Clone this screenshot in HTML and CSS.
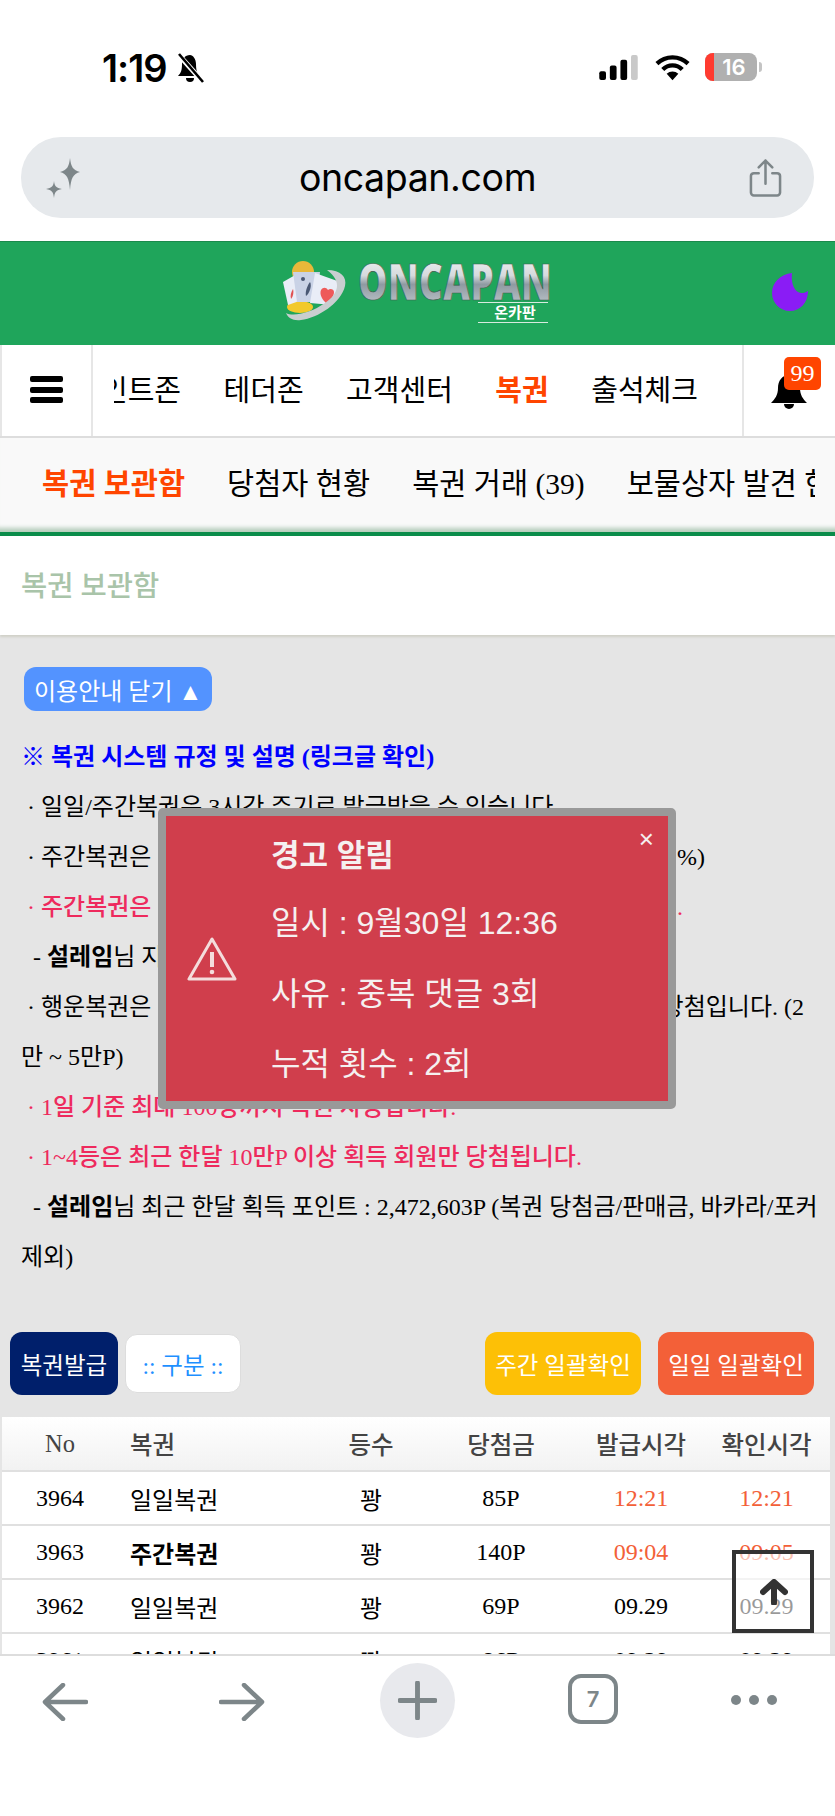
FILE: index.html
```html
<!DOCTYPE html>
<html lang="ko">
<head>
<meta charset="utf-8">
<title>oncapan.com</title>
<link rel="stylesheet" href="styles.css">
</head>
<body>
<div class="phone">
	<div class="status">
		<div class="status-left">
			<span class="clock">1:19</span>
			<svg class="mute" viewBox="0 0 30 30"><path d="M15 2c-5 0-8 4-8 9 0 6-1 9-4 12h22c-3-3-4-6-4-12 0-5-3-9-6-9z" fill="#000"/><path d="M11 25a4 4 0 0 0 8 0z" fill="#000"/><path d="M3 1l25 28" stroke="#fff" stroke-width="5"/><path d="M4 1l24 28" stroke="#000" stroke-width="2.6"/></svg>
		</div>
		<div class="status-right">
			<svg class="signal" viewBox="0 0 40 26"><rect x="0" y="17" width="7" height="9" rx="2" fill="#000"/><rect x="11" y="11" width="7" height="15" rx="2" fill="#000"/><rect x="22" y="5" width="7" height="21" rx="2" fill="#000"/><rect x="33" y="0" width="7" height="26" rx="2" fill="#c9c9c9"/></svg>
			<svg class="wifi" viewBox="0 0 36 26"><path d="M2 9a23 23 0 0 1 32 0" fill="none" stroke="#000" stroke-width="4.4"/><path d="M8 15a14 14 0 0 1 20 0" fill="none" stroke="#000" stroke-width="4.4"/><path d="M12 19.500a9 9 0 0 1 12 0L18 26z" fill="#000"/></svg>
			<div class="battery"><span class="battery-low"></span><span class="battery-num">16</span></div>
			<span class="battery-cap"></span>
		</div>
	</div>

	<div class="urlbar">
		<svg class="spark" viewBox="0 0 40 40"><path d="M24 0c1 9 3 12 10 14-7 2-9 6-10 18-1-12-3-16-10-18 7-2 9-5 10-14z" fill="#7d8689"/><path d="M8 23c.6 5 2 7 8 8-6 1-7.400 3-8 9-.6-6-2-8-8-9 6-1 7.400-3 8-8z" fill="#7d8689"/></svg>
		<span class="url">oncapan.com</span>
		<svg class="share" viewBox="0 0 34 40"><path d="M10 15H5a3 3 0 0 0-3 3v17a3 3 0 0 0 3 3h24a3 3 0 0 0 3-3V18a3 3 0 0 0-3-3h-5" fill="none" stroke="#7d8689" stroke-width="2.6" stroke-linecap="round"/><path d="M17 26V2M10 9l7-7 7 7" fill="none" stroke="#7d8689" stroke-width="2.600" stroke-linecap="round" stroke-linejoin="round"/></svg>
	</div>

	<div class="content">
		<header class="site-head">
			<svg class="logo" viewBox="0 0 270 72">
				<defs>
					<linearGradient id="metal" x1="0" y1="0" x2="0" y2="1">
						<stop offset="0" stop-color="#fbfcfc"/>
						<stop offset=".42" stop-color="#d5dadd"/>
						<stop offset=".55" stop-color="#8f9aa2"/>
						<stop offset=".8" stop-color="#b4bcc2"/>
						<stop offset="1" stop-color="#f2f4f5"/>
					</linearGradient>
				</defs>
				<circle cx="20" cy="14" r="11" fill="#e8b83a"/>
				<ellipse cx="17" cy="49" rx="13" ry="6" fill="#f2c92c"/>
				<path d="M0 24l14-8 5 26-14 5z" fill="#e9edf7"/>
				<path d="M10 14h27l-3 30H14z" fill="#c9d2e6"/>
				<path d="M32 15l28 10-11 22-22-2z" fill="#e9edf7"/>
				<path d="M38 32c2-3 5-3 7 0 2-2 6-1 6 2 0 5-4 9-8 11-3-3-7-8-5-13z" fill="#ee5a5a"/>
				<path d="M27 24c2 3 0 11-4 14-1-4 1-10 4-14z" fill="#4a5874"/>
				<circle cx="20" cy="21" r="2" fill="#4a5874"/>
				<path d="M10 31c1 3 0 8-2 10-1-3 0-7 2-10z" fill="#e05252"/>
				<path d="M44 12c14 0 20 7 18 16-4 17-27 32-44 34-8 1-13-2-15-7 7 4 25 0 39-10 13-9 18-21 2-33z" fill="#c9ced0"/>
				<text class="logo-word" x="75" y="42" textLength="194" lengthAdjust="spacingAndGlyphs" fill="url(#metal)">ONCAPAN</text>
				<rect x="195" y="44" width="70" height="1" fill="#d7eadf"/>
				<text class="logo-sub" x="232" y="60" text-anchor="middle">온카판</text>
				<rect x="195" y="64" width="70" height="1" fill="#d7eadf"/>
			</svg>
			<svg class="moon" viewBox="0 0 36 38"><path d="M20 0C8 1 0 10 0 20c0 10 8 18 18 18 10 0 18-8 18-20-3 2-7 3-10 1-5-3-7-11-6-19z" fill="#8a1cf5"/></svg>
		</header>

		<nav class="main-nav">
			<div class="burger"><i></i><i></i><i></i></div>
			<div class="menu-wrap">
				<div class="menu">
					<a>인트존</a>
					<a>테더존</a>
					<a>고객센터</a>
					<a class="on">복권</a>
					<a>출석체크</a>
				</div>
			</div>
			<div class="alarm">
				<svg class="bell" viewBox="0 0 36 34"><path d="M18 0c-7 0-11 6-11 13 0 7-3 11-7 15h36c-4-4-7-8-7-15 0-7-4-13-11-13z" fill="#000"/><path d="M13 29a5 5 0 0 0 10 0z" fill="#000"/></svg>
				<span class="badge">99</span>
			</div>
		</nav>

		<div class="sub-nav">
			<div class="sub-track">
				<a class="on">복권 보관함</a>
				<a>당첨자 현황</a>
				<a>복권 거래 (39)</a>
				<a>보물상자 발견 현황</a>
			</div>
		</div>

		<div class="page-title">복권 보관함</div>

		<section class="guide">
			<button class="guide-btn">이용안내 닫기 ▲</button>
			<p class="rule head">※ 복권 시스템 규정 및 설명 (링크글 확인)</p>
			<p class="rule">&nbsp;· 일일/주간복권은 3시간 주기로 발급받을 수 있습니다.</p>
			<p class="rule cut">&nbsp;· 주간복권은<span class="tail t-pct">%)</span></p>
			<p class="rule cut pink">&nbsp;· 주간복권은<span class="tail t-dot">.</span></p>
			<p class="rule">&nbsp; - <b>설레임</b>님 지</p>
			<p class="rule cut">&nbsp;· 행운복권은<span class="tail t-win">당첨입니다. (2</span></p>
			<p class="rule">만 ~ 5만P)</p>
			<p class="rule pink">&nbsp;· 1일 기준 최대 100장까지 복권 사용합니다.</p>
			<p class="rule pink">&nbsp;· 1~4등은 최근 한달 10만P 이상 획득 회원만 당첨됩니다.</p>
			<p class="rule">&nbsp; - <b>설레임</b>님 최근 한달 획득 포인트 : 2,472,603P (복권 당첨금/판매금, 바카라/포커<br>제외)</p>
		</section>

		<div class="actions">
			<button class="act navy">복권발급</button>
			<button class="act plain">:: 구분 ::</button>
			<button class="act amber push">주간 일괄확인</button>
			<button class="act coral">일일 일괄확인</button>
		</div>

		<table class="tickets">
			<thead>
				<tr><th class="c-no">No</th><th class="c-name">복권</th><th class="c-rank">등수</th><th class="c-prize">당첨금</th><th class="c-time">발급시각</th><th class="c-last">확인시각</th></tr>
			</thead>
			<tbody>
				<tr><td>3964</td><td class="c-name">일일복권</td><td>꽝</td><td>85P</td><td class="red">12:21</td><td class="red">12:21</td></tr>
				<tr><td>3963</td><td class="c-name"><b>주간복권</b></td><td>꽝</td><td>140P</td><td class="red">09:04</td><td class="red">09:05</td></tr>
				<tr><td>3962</td><td class="c-name">일일복권</td><td>꽝</td><td>69P</td><td>09.29</td><td>09.29</td></tr>
				<tr><td>3961</td><td class="c-name">일일복권</td><td>꽝</td><td>86P</td><td>09.29</td><td>09.29</td></tr>
			</tbody>
		</table>
	</div>

	<div class="toolbar">
		<svg class="tool-ic" viewBox="0 0 46 38"><path d="M21 2L3 19l18 17M3 19h41" fill="none" stroke="#7d8689" stroke-width="4.500" stroke-linecap="round" stroke-linejoin="round"/></svg>
		<svg class="tool-ic fwd" viewBox="0 0 46 38"><path d="M25 2l18 17-18 17M43 19H2" fill="none" stroke="#7d8689" stroke-width="4.500" stroke-linecap="round" stroke-linejoin="round"/></svg>
		<div class="plus-btn"><svg viewBox="0 0 40 40"><path d="M20 2v36M2 20h36" stroke="#7d8689" stroke-width="5" stroke-linecap="round"/></svg></div>
		<div class="tabs-btn">7</div>
		<div class="dots"><i></i><i></i><i></i></div>
	</div>

	<div class="warn-box">
		<span class="warn-x">×</span>
		<svg class="warn-ic" viewBox="0 0 50 46"><path d="M25 3L2 43h46z" fill="none" stroke="#f4dcdc" stroke-width="3" stroke-linejoin="round"/><path d="M25 16v15" stroke="#f4dcdc" stroke-width="4"/><circle cx="25" cy="36" r="2.300" fill="#f4dcdc"/></svg>
		<div class="warn-text">
			<strong>경고 알림</strong>
			<span>일시 : 9월30일 12:36</span>
			<span>사유 : 중복 댓글 3회</span>
			<span>누적 횟수 : 2회</span>
		</div>
	</div>

	<div class="to-top">
		<svg viewBox="0 0 28 26"><path d="M14 24V4M3 13L14 3l11 10" fill="none" stroke="#333" stroke-width="6" stroke-linecap="round" stroke-linejoin="round"/></svg>
	</div>
</div>
</body>
</html>
```

FILE: styles.css
```css
*{
	box-sizing:border-box;
}
html,body{
	margin:0;
	padding:0;
	background:#fff;
}
body{
	font-family:"Liberation Serif","Noto Sans CJK KR",serif;
	color:#000;
}
a{
	color:inherit;
	text-decoration:none;
}
.phone{
	position:relative;
	width:835px;
	height:1816px;
	overflow:hidden;
	display:flex;
	flex-direction:column;
}

/* status bar */
.status{
	height:137px;
	flex:none;
	padding:52px 73px 0 102px;
	display:flex;
	justify-content:space-between;
	align-items:flex-start;
}
.status-left{
	display:flex;
	align-items:center;
	gap:8px;
}
.clock{
	font-family:"Inter","Liberation Sans",sans-serif;
	font-size:38px;
	font-weight:600;
	line-height:32px;
	letter-spacing:-1px;
}
.mute{
	width:30px;
	height:30px;
}
.status-right{
	display:flex;
	align-items:center;
	height:30px;
}
.signal{
	width:39px;
	height:25px;
	margin-right:17px;
}
.wifi{
	width:35px;
	height:27px;
	margin-right:15px;
}
.battery{
	position:relative;
	width:52px;
	height:28px;
	border-radius:8px;
	background:#b0b0b0;
	overflow:hidden;
	text-align:center;
}
.battery-low{
	position:absolute;
	left:0;
	top:0;
	bottom:0;
	width:9px;
	background:#ff3b30;
}
.battery-num{
	position:relative;
	left:3px;
	font-family:"Inter","Liberation Sans",sans-serif;
	font-size:22px;
	font-weight:600;
	line-height:28px;
	color:#fff;
}
.battery-cap{
	width:3px;
	height:10px;
	margin-left:2px;
	border-radius:0 3px 3px 0;
	background:#c4c4c4;
}

/* address bar */
.urlbar{
	flex:none;
	height:81px;
	margin:0 21px 23px;
	padding:0 25px;
	border-radius:40px;
	background:#e6e9ec;
	display:flex;
	align-items:center;
	justify-content:space-between;
}
.spark{
	width:40px;
	height:40px;
}
.url{
	font-family:"Inter","Liberation Sans",sans-serif;
	font-size:37.500px;
	letter-spacing:-.4px;
}
.share{
	width:33px;
	height:40px;
	margin-right:7px;
}

.content{
	flex:1;
	min-height:0;
	overflow:hidden;
	background:#e5e5e5;
}

/* green header */
.site-head{
	position:relative;
	height:104px;
	background:#1fa55b;
	border-top:1px solid #1a8a4c;
	display:flex;
	justify-content:center;
	align-items:center;
}
.logo{
	width:270px;
	height:72px;
}
.logo-word{
	font-family:"Open Sans","Liberation Sans",sans-serif;
	font-size:50px;
	font-weight:800;
	stroke:#3d5a4c;
	stroke-width:.7px;
}
.logo-sub{
	font-family:"Noto Sans CJK KR",sans-serif;
	font-size:15px;
	font-weight:700;
	fill:#fff;
}
.moon{
	position:absolute;
	right:27px;
	top:31px;
	width:36px;
	height:38px;
}

/* main menu */
.main-nav{
	height:93px;
	background:#fff;
	border-bottom:2px solid #ddd;
	display:flex;
}
.burger{
	flex:none;
	width:93px;
	padding-top:31px;
	border-right:2px solid #e6e6e6;
	border-left:2px solid #e6e6e6;
}
.burger i{
	display:block;
	width:33px;
	height:6px;
	margin:0 auto 4.500px;
	border-radius:2px;
	background:#000;
}
.menu-wrap{
	flex:1;
	margin-left:21px;
	overflow:hidden;
}
.menu{
	display:flex;
	gap:42.500px;
	margin-left:-13px;
	font-size:29px;
	line-height:92px;
	white-space:nowrap;
}
.menu .on{
	color:#ff4500;
	font-weight:700;
}
.alarm{
	position:relative;
	flex:none;
	width:93px;
	border-left:2px solid #e6e6e6;
}
.bell{
	position:absolute;
	left:27px;
	top:30px;
	width:36px;
	height:34px;
}
.badge{
	position:absolute;
	left:40px;
	top:12px;
	width:37px;
	height:33px;
	border-radius:5px;
	background:#ff4500;
	color:#fff;
	font-size:24px;
	line-height:32px;
	text-align:center;
}

/* sub menu */
.sub-nav{
	height:98px;
	padding:0 20px 0 42px;
	background:#f9f9f9;
	border-bottom:4px solid #0a8c4a;
	box-shadow:inset 0 -8px 4px -4px #b5cdbb;
}
.sub-track{
	display:flex;
	gap:42px;
	overflow:hidden;
	font-size:29.500px;
	line-height:92px;
	white-space:nowrap;
}
.sub-track .on{
	color:#ff4500;
	font-weight:700;
}

.page-title{
	height:99px;
	padding-left:21px;
	background:#fff;
	box-shadow:0 2px 2px #d0d0c8;
	color:#a9c4a9;
	font-size:28.500px;
	font-weight:500;
	line-height:102px;
}

/* guide text */
.guide{
	padding:32px 21px 0;
}
.guide-btn{
	display:block;
	height:44px;
	margin:0 0 21px 3px;
	padding:0 10px;
	border:0;
	border-radius:12px;
	background:#5393ff;
	color:#fff;
	font-family:inherit;
	font-size:24px;
}
.rule{
	margin:0;
	font-size:24px;
	line-height:50px;
	white-space:nowrap;
}
.head{
	color:#00f;
	font-weight:700;
}
.pink{
	color:#ee2a5d;
	font-weight:500;
}
.cut{
	display:flex;
}
.tail{
	margin-left:auto;
}
.t-pct{
	margin-right:109px;
}
.t-dot{
	margin-right:131px;
}
.t-win{
	margin-right:10px;
}

/* buttons above table */
.actions{
	display:flex;
	align-items:center;
	gap:7px;
	height:63px;
	margin-top:50px;
	padding:0 21px 0 10px;
}
.act{
	height:63px;
	padding:0;
	border:0;
	border-radius:12px;
	color:#fff;
	font-family:inherit;
	font-size:23.500px;
}
.navy{
	width:108px;
	background:#001f6b;
}
.plain{
	width:116px;
	height:59px;
	background:#fff;
	border:1px solid #ddd;
	color:#1e90ff;
}
.amber{
	width:156px;
	background:#fdc006;
}
.coral{
	width:156px;
	margin-left:10px;
	background:#f36038;
}
.push{
	margin-left:auto;
}

/* ticket table */
.tickets{
	width:828px;
	margin:22px 0 0 2px;
	border-collapse:collapse;
	table-layout:fixed;
	font-size:24px;
	text-align:center;
}
.tickets th{
	height:54px;
	padding:0;
	border-bottom:2px solid #e0e0e0;
	background:linear-gradient(#fff,#f2f2f2);
	color:#444;
	font-size:24.500px;
	font-weight:500;
}
.tickets td{
	height:54px;
	padding:0;
	border-bottom:2px solid #e0e0e0;
	background:#fff;
}
.tickets .c-no{
	width:116px;
	font-weight:400;
}
.tickets .c-name{
	width:201px;
	padding-left:12px;
	text-align:left;
}
.c-rank{
	width:104px;
}
.c-prize{
	width:156px;
}
.c-time{
	width:124px;
}
.c-last{
	width:127px;
}
.red{
	color:#f36038;
}

/* browser toolbar */
.toolbar{
	flex:none;
	height:162px;
	padding:7px 0 0 42px;
	background:#fff;
	border-top:2px solid #ddd;
	display:flex;
	align-items:flex-start;
}
.tool-ic{
	width:46px;
	height:38px;
	margin-top:20px;
}
.fwd{
	margin-left:131px;
}
.plus-btn{
	width:75px;
	height:75px;
	margin-left:115px;
	padding:18px;
	border-radius:50%;
	background:#e8e9ed;
}
.plus-btn svg{
	display:block;
}
.tabs-btn{
	width:50px;
	height:50px;
	margin-top:11px;
	margin-left:113px;
	border:4px solid #7d8689;
	border-radius:13px;
	color:#7d8689;
	font-family:"Inter","Liberation Sans",sans-serif;
	font-size:22px;
	font-weight:600;
	line-height:42px;
	text-align:center;
}
.dots{
	display:flex;
	gap:8px;
	margin-top:32px;
	margin-left:113px;
}
.dots i{
	width:10px;
	height:10px;
	border-radius:50%;
	background:#7d8689;
}

/* warning popup */
.warn-box{
	position:absolute;
	left:158px;
	top:808px;
	width:518px;
	height:301px;
	padding:0 0 0 105px;
	border:8px solid #999;
	border-radius:5px;
	background:#d03e4c;
	color:#f5f0f0;
	font-family:"Liberation Sans","Noto Sans CJK KR",sans-serif;
}
.warn-x{
	position:absolute;
	right:14px;
	top:10px;
	font-size:26px;
	line-height:26px;
}
.warn-ic{
	position:absolute;
	left:21px;
	top:120px;
	width:50px;
	height:46px;
}
.warn-text{
	display:flex;
	flex-direction:column;
}
.warn-text strong{
	height:59px;
	margin-top:13px;
	font-size:31px;
	line-height:54px;
}
.warn-text span{
	height:70.500px;
	font-size:32px;
	line-height:70px;
}

/* scroll to top */
.to-top{
	position:absolute;
	left:732px;
	top:1550px;
	width:82px;
	height:83px;
	border:4px solid #333;
	background:rgba(255,255,255,.6);
}
.to-top svg{
	position:absolute;
	left:24px;
	top:25px;
	width:28px;
	height:26px;
}
```
